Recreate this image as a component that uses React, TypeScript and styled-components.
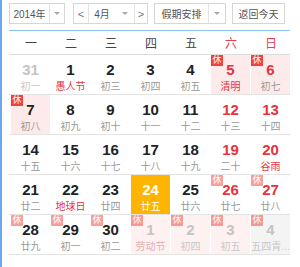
import styled, { createGlobalStyle } from 'styled-components';

const GlobalStyle = createGlobalStyle`
  html, body {
    margin: 0;
    padding: 0;
    background: #fff;
  }
  body {
    font-family: 'Liberation Sans', 'Noto Sans CJK SC', sans-serif;
  }
`;

const Wrapper = styled.div`
  height: 267px;
  border-left: 2px solid #6aa8ec;
  padding: 3px 9px 0 7px;
  box-sizing: border-box;
`;

const Toolbar = styled.div`
  display: flex;
  align-items: center;
  height: 21px;
  padding-bottom: 6px;
  border-bottom: 1px solid #8dc1f0;
  width: 281px;
`;

const Box = styled.div<{ $ml?: number }>`
  display: flex;
  align-items: stretch;
  height: 21px;
  box-sizing: border-box;
  border: 1px solid #d6d6d6;
  margin-left: ${(p) => p.$ml ?? 0}px;
  font-size: 10px;
  color: #444;
  background: #fff;
`;

const Part = styled.div<{ $w: number; $divider?: boolean }>`
  width: ${(p) => p.$w}px;
  display: flex;
  align-items: center;
  justify-content: center;
  border-right: ${(p) => (p.$divider ? '1px solid #e2e2e2' : 'none')};
  color: #555;
`;

const Caret = styled.span`
  width: 0;
  height: 0;
  border-left: 3px solid transparent;
  border-right: 3px solid transparent;
  border-top: 3px solid #aaa;
`;

const Arrow = styled.span`
  font-size: 11px;
  color: #777;
`;

const Weekdays = styled.div`
  display: grid;
  grid-template-columns: repeat(7, 40px);
  height: 24px;
  border-bottom: 1px solid #dcdcdc;
  width: 281px;
  padding-left: 2px;
  box-sizing: border-box;
`;

const Weekday = styled.div<{ $red?: boolean }>`
  display: flex;
  align-items: center;
  justify-content: center;
  font-size: 12px;
  color: ${(p) => (p.$red ? '#e8404a' : '#444')};
`;

const Row = styled.div`
  display: grid;
  grid-template-columns: repeat(7, 40px);
  height: 40px;
  border-bottom: 1px solid #e3e3e3;
  width: 281px;
  padding-left: 2px;
  box-sizing: border-box;
`;

type Kind = 'normal' | 'holiday' | 'today' | 'work';

const Cell = styled.div<{ $kind: Kind; $other?: boolean }>`
  position: relative;
  display: flex;
  flex-direction: column;
  align-items: center;
  justify-content: flex-start;
  margin-right: 1px;
  background: ${(p) =>
    p.$kind === 'today'
      ? '#ffb400'
      : p.$kind === 'holiday'
      ? p.$other
        ? '#fdf1f1'
        : '#fdeaea'
      : p.$kind === 'work'
      ? '#f4f4f4'
      : 'transparent'};
`;

const Num = styled.div<{ $color: string }>`
  margin-top: 7px;
  font-size: 15px;
  font-weight: bold;
  line-height: 16px;
  color: ${(p) => p.$color};
`;

const Lunar = styled.div<{ $color: string }>`
  margin-top: 3px;
  font-size: 10px;
  line-height: 12px;
  color: ${(p) => p.$color};
  white-space: nowrap;
`;

const Badge = styled.span<{ $faded?: boolean }>`
  position: absolute;
  left: 0;
  top: 0;
  width: 12px;
  height: 11px;
  line-height: 11px;
  text-align: center;
  font-size: 9px;
  color: #fff;
  background: #f0413c;
  opacity: ${(p) => (p.$faded ? 0.5 : 1)};
`;

type Day = {
  n: number;
  lunar: string;
  redNum?: boolean;
  redLunar?: boolean;
  kind?: Kind;
  other?: boolean;
  rest?: 'on' | 'faded';
};

const weeks: Day[][] = [
  [
    { n: 31, lunar: '初一', other: true },
    { n: 1, lunar: '愚人节', redLunar: true },
    { n: 2, lunar: '初三' },
    { n: 3, lunar: '初四' },
    { n: 4, lunar: '初五' },
    { n: 5, lunar: '清明', redNum: true, redLunar: true, kind: 'holiday', rest: 'on' },
    { n: 6, lunar: '初七', redNum: true, kind: 'holiday', rest: 'on' },
  ],
  [
    { n: 7, lunar: '初八', kind: 'holiday', rest: 'on' },
    { n: 8, lunar: '初九' },
    { n: 9, lunar: '初十' },
    { n: 10, lunar: '十一' },
    { n: 11, lunar: '十二' },
    { n: 12, lunar: '十三', redNum: true },
    { n: 13, lunar: '十四', redNum: true },
  ],
  [
    { n: 14, lunar: '十五' },
    { n: 15, lunar: '十六' },
    { n: 16, lunar: '十七' },
    { n: 17, lunar: '十八' },
    { n: 18, lunar: '十九' },
    { n: 19, lunar: '二十', redNum: true },
    { n: 20, lunar: '谷雨', redNum: true, redLunar: true },
  ],
  [
    { n: 21, lunar: '廿二' },
    { n: 22, lunar: '地球日', redLunar: true },
    { n: 23, lunar: '廿四' },
    { n: 24, lunar: '廿五', kind: 'today' },
    { n: 25, lunar: '廿六' },
    { n: 26, lunar: '廿七', redNum: true, rest: 'faded' },
    { n: 27, lunar: '廿八', redNum: true, rest: 'faded' },
  ],
  [
    { n: 28, lunar: '廿九', rest: 'faded' },
    { n: 29, lunar: '初一', rest: 'faded' },
    { n: 30, lunar: '初二', rest: 'faded' },
    { n: 1, lunar: '劳动节', other: true, kind: 'holiday', rest: 'faded' },
    { n: 2, lunar: '初四', other: true, kind: 'holiday', rest: 'faded' },
    { n: 3, lunar: '初五', other: true, kind: 'holiday', rest: 'faded' },
    { n: 4, lunar: '五四青...', other: true, kind: 'work', rest: 'faded' },
  ],
];

function numColor(d: Day) {
  if (d.kind === 'today') return '#fff';
  if (d.other) return '#c4c4c4';
  if (d.redNum) return '#e8323c';
  return '#222';
}

function lunarColor(d: Day) {
  if (d.kind === 'today') return '#fff';
  if (d.other) return d.redLunar || d.n === 1 ? '#e3b0b0' : '#c8c8c8';
  if (d.redLunar) return '#e8323c';
  return '#999';
}

export default function App() {
  return (
    <>
      <GlobalStyle />
      <Wrapper>
        <Toolbar>
          <Box>
            <Part $w={39} $divider>2014年</Part>
            <Part $w={14}>
              <Caret />
            </Part>
          </Box>
          <Box $ml={8}>
            <Part $w={14} $divider>
              <Arrow>&lt;</Arrow>
            </Part>
            <Part $w={26}>4月</Part>
            <Part $w={19} $divider>
              <Caret />
            </Part>
            <Part $w={12}>
              <Arrow>&gt;</Arrow>
            </Part>
          </Box>
          <Box $ml={6}>
            <Part $w={53} $divider>假期安排</Part>
            <Part $w={16}>
              <Caret />
            </Part>
          </Box>
          <Box $ml={6}>
            <Part $w={51}>返回今天</Part>
          </Box>
        </Toolbar>
        <Weekdays>
          {['一', '二', '三', '四', '五', '六', '日'].map((w, i) => (
            <Weekday key={w} $red={i > 4}>
              {w}
            </Weekday>
          ))}
        </Weekdays>
        {weeks.map((week, wi) => (
          <Row key={wi}>
            {week.map((d, di) => (
              <Cell key={di} $kind={d.kind ?? 'normal'} $other={d.other}>
                {d.rest && <Badge $faded={d.rest === 'faded'}>休</Badge>}
                <Num $color={numColor(d)}>{d.n}</Num>
                <Lunar $color={lunarColor(d)}>{d.lunar}</Lunar>
              </Cell>
            ))}
          </Row>
        ))}
      </Wrapper>
    </>
  );
}
